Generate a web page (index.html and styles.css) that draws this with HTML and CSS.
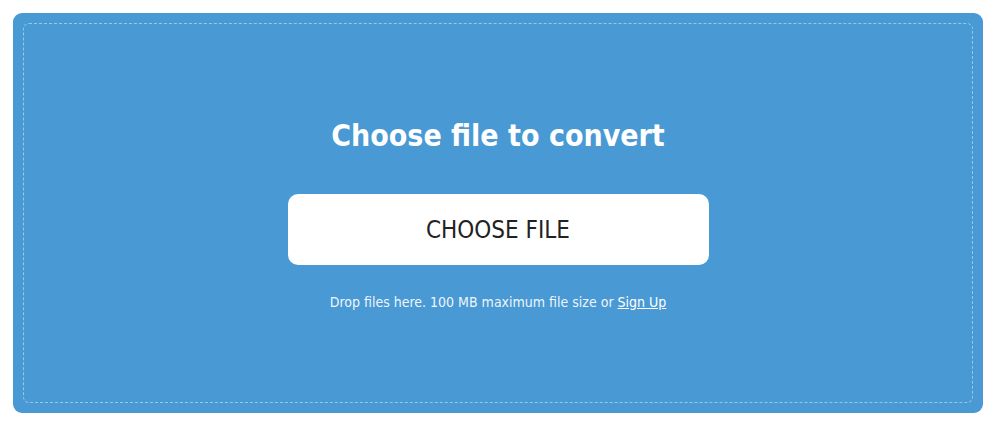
FILE: index.html
```html
<!DOCTYPE html>
<html>
<head>
<meta charset="utf-8">
<link rel="stylesheet" href="styles.css">
</head>
<body>
<div class="dropzone">
  <div class="inner">
    <h1 class="title">Choose file to convert</h1>
    <button class="choose">CHOOSE FILE</button>
    <p class="note">Drop files here. 100 MB maximum file size or <a href="#" class="signup">Sign Up</a></p>
  </div>
</div>
</body>
</html>
```
FILE: styles.css
```css
html, body {
  margin: 0;
  padding: 0;
  background: #ffffff;
}
body {
  padding: 13px 11px 0 13px;
  font-family: "DejaVu Sans Condensed", "DejaVu Sans", sans-serif;
}
.dropzone {
  box-sizing: border-box;
  width: 970px;
  height: 400px;
  background: #4899d4;
  border-radius: 9px;
  padding: 10px;
}
.inner {
  box-sizing: border-box;
  height: 100%;
  padding-top: 4px;
  border: 1px dashed rgba(255, 255, 255, 0.45);
  border-radius: 6px;
  display: flex;
  flex-direction: column;
  align-items: center;
  justify-content: center;
}
.title {
  margin: 0;
  color: #ffffff;
  font-size: 30px;
  line-height: 36px;
  font-weight: bold;
}
.choose {
  margin-top: 40px;
  width: 421px;
  height: 71px;
  border: none;
  border-radius: 10px;
  background: #ffffff;
  color: #222222;
  font-family: inherit;
  font-size: 24px;
  cursor: pointer;
}
.note {
  margin: 27px 0 0;
  color: #eef5fb;
  font-size: 14px;
  line-height: 20px;
}
.signup {
  color: #ffffff;
  text-decoration: underline;
}
```
